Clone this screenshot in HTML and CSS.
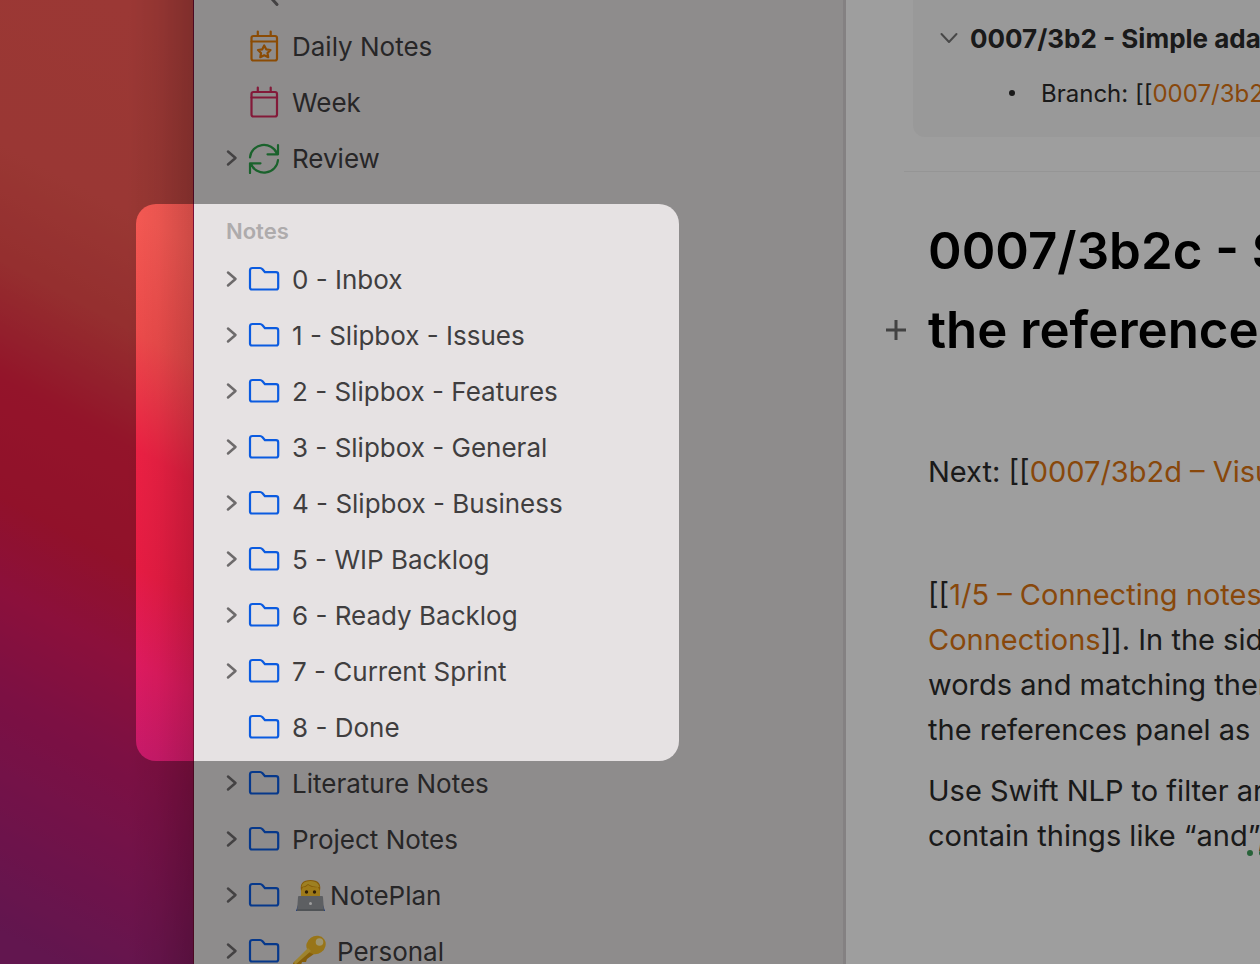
FILE: index.html
```html
<!DOCTYPE html>
<html lang="en">
<head>
    <meta charset="UTF-8">
    <meta name="viewport" content="width=device-width, initial-scale=1.0">
    <title>NotePlan</title>
    <link rel="stylesheet" href="styles.css">
</head>
<body>

    <!-- Shared icons -->
    <svg class="sprite" width="0" height="0" aria-hidden="true">
        <symbol id="chevron" viewBox="0 0 12 18">
            <path d="M2 2.500L9.500 9L2 15.500"/>
        </symbol>
        <symbol id="folder" viewBox="0 0 32 32">
            <path d="M2 7.500Q2 5 4.500 5H12Q13.500 5 14.500 6.200L17 9.200H28Q30.200 9.200 30.200 11.400V24.500Q30.200 26.500 28.200 26.500H4Q2 26.500 2 24.500Z"/>
        </symbol>
    </svg>

    <!-- Desktop wallpaper -->
    <div class="desktop"></div>

    <!-- Sidebar -->
    <nav class="sidebar">
        <ul class="filters">
            <li class="row">
                <a href="#" aria-label="Search"><svg class="icon search" viewBox="0 0 32 32"><circle cx="13" cy="14" r="9.500"/><path d="M20 20.500L29 30.500"/></svg></a>
            </li>
            <li class="row">
                <a href="#"><svg class="icon daily" viewBox="0 0 32 32"><rect x="3.500" y="6" width="25.500" height="24.500" rx="2"/><path d="M3.500 11.500H29M9.800 1.500V6M22.700 1.500V6M16.200 15.500L18.200 19.300L22.500 20L19.500 23L20.200 27.200L16.200 25.300L12.300 27.200L13 23L10 20L14.300 19.300Z"/></svg>Daily Notes</a>
            </li>
            <li class="row">
                <a href="#"><svg class="icon week" viewBox="0 0 32 32"><rect x="3.500" y="6" width="25.500" height="24.500" rx="2"/><path d="M3.500 11.500H29M9.800 1.500V6M22.700 1.500V6"/></svg>Week</a>
            </li>
            <li class="row">
                <button class="toggle" aria-label="Expand"><svg><use href="#chevron"/></svg></button>
                <a href="#"><svg class="icon review" viewBox="0 0 32 32"><path d="M2 15.500A14 13.500 0 0 1 29 11.500M30 3V12.300H19.500M30 18A14 13.500 0 0 1 3 22M2 31V21.300H12.500"/></svg>Review</a>
            </li>
        </ul>

        <section class="notes">
            <h2>Notes</h2>
            <ul>
                <li class="row"><button class="toggle" aria-label="Expand"><svg><use href="#chevron"/></svg></button><a href="#"><svg class="icon folder"><use href="#folder"/></svg>0 - Inbox</a></li>
                <li class="row"><button class="toggle" aria-label="Expand"><svg><use href="#chevron"/></svg></button><a href="#"><svg class="icon folder"><use href="#folder"/></svg>1 - Slipbox - Issues</a></li>
                <li class="row"><button class="toggle" aria-label="Expand"><svg><use href="#chevron"/></svg></button><a href="#"><svg class="icon folder"><use href="#folder"/></svg>2 - Slipbox - Features</a></li>
                <li class="row"><button class="toggle" aria-label="Expand"><svg><use href="#chevron"/></svg></button><a href="#"><svg class="icon folder"><use href="#folder"/></svg>3 - Slipbox - General</a></li>
                <li class="row"><button class="toggle" aria-label="Expand"><svg><use href="#chevron"/></svg></button><a href="#"><svg class="icon folder"><use href="#folder"/></svg>4 - Slipbox - Business</a></li>
                <li class="row"><button class="toggle" aria-label="Expand"><svg><use href="#chevron"/></svg></button><a href="#"><svg class="icon folder"><use href="#folder"/></svg>5 - WIP Backlog</a></li>
                <li class="row"><button class="toggle" aria-label="Expand"><svg><use href="#chevron"/></svg></button><a href="#"><svg class="icon folder"><use href="#folder"/></svg>6 - Ready Backlog</a></li>
                <li class="row"><button class="toggle" aria-label="Expand"><svg><use href="#chevron"/></svg></button><a href="#"><svg class="icon folder"><use href="#folder"/></svg>7 - Current Sprint</a></li>
                <li class="row"><a href="#"><svg class="icon folder"><use href="#folder"/></svg>8 - Done</a></li>
            </ul>
        </section>

        <ul>
            <li class="row"><button class="toggle" aria-label="Expand"><svg><use href="#chevron"/></svg></button><a href="#"><svg class="icon folder"><use href="#folder"/></svg>Literature Notes</a></li>
            <li class="row"><button class="toggle" aria-label="Expand"><svg><use href="#chevron"/></svg></button><a href="#"><svg class="icon folder"><use href="#folder"/></svg>Project Notes</a></li>
            <li class="row"><button class="toggle" aria-label="Expand"><svg><use href="#chevron"/></svg></button><a href="#"><svg class="icon folder"><use href="#folder"/></svg><span class="emoji-label"><svg class="emoji" viewBox="0 0 34 34"><path fill="#2457c4" d="M4 33L7 24H30L33 33Z"/><path fill="#ffc629" d="M9 10Q9 3 18.500 3Q28 3 28 10V22H9Z"/><path fill="#d9930f" d="M9 13Q7 2 18.500 2Q30 2 28 13L26 9Q20 10 16 7Q13 10 11 9Z"/><path fill="#ffcf38" d="M9.500 9Q10 3 18.500 3Q26 3 27.500 9Q20 9 16 6Q13 9 9.500 9Z"/><circle cx="14.500" cy="14" r="1.700" fill="#4a2f0c"/><circle cx="22.500" cy="14" r="1.700" fill="#4a2f0c"/><path fill="#96999f" d="M6 19Q6 18 7 18H30Q31 18 31 19L32 33H5Z"/><path fill="#82868c" d="M5 31H32V33H5Z"/><circle cx="18.500" cy="25.500" r="1.500" fill="#fff"/></svg>NotePlan</span></a></li>
            <li class="row"><button class="toggle" aria-label="Expand"><svg><use href="#chevron"/></svg></button><a href="#"><svg class="icon folder"><use href="#folder"/></svg><span class="emoji-label spaced"><svg class="emoji" viewBox="0 0 34 34"><path fill="#d99a12" d="M17 15L22 20L15 25L14 28L10 28L9 31L5 32L2 34L1 29Z"/><ellipse cx="24" cy="11" rx="10" ry="9" transform="rotate(-35 24 11)" fill="#f6bd27"/><path fill="#ffd34a" d="M16 14L19 17L3 31L2 28Z"/><circle cx="27.500" cy="8" r="3.800" fill="#fff0b5"/></svg>Personal</span></a></li>
        </ul>
    </nav>

    <!-- Editor -->
    <main class="editor">
        <section class="references">
            <h3><button class="fold" aria-label="Collapse"><svg viewBox="0 0 18 12"><path d="M1.500 2L9 10L16.500 2"/></svg></button>0007/3b2 - Simple ada</h3>
            <ul>
                <li>Branch: [[<a href="#">0007/3b2</a></li>
            </ul>
        </section>
        <hr>
        <article>
            <header>
                <button class="add" aria-label="Add"><svg viewBox="0 0 20 20"><path d="M10 0V20M0 10H20"/></svg></button>
                <h1>0007/3b2c - S<br>the references</h1>
            </header>
            <p class="next">Next: [[<a href="#">0007/3b2d – Visu</a></p>
            <p>[[<a href="#">1/5 – Connecting notes<br>Connections</a>]]. In the sid<br>words and matching ther<br>the references panel as '</p>
            <p>Use Swift NLP to filter ar<br>contain things like “and<span class="grammar">”,</span></p>
        </article>
    </main>

</body>
</html>
```

FILE: styles.css
```css
* {
    box-sizing: border-box;
}
body {
    margin: 0;
    display: flex;
    height: 100vh;
    overflow: hidden;
    font-family: Inter, "Noto Sans", sans-serif;
    background-color: #fff;
}
ul {
    list-style: none;
    margin: 0;
    padding: 0;
}
button {
    padding: 0;
    border: none;
    background: none;
    cursor: pointer;
}
svg {
    fill: none;
    stroke-linecap: round;
    stroke-linejoin: round;
}
.sprite {
    position: absolute;
}
/* Wallpaper, with the shadow of the window on its right side */
.desktop {
    flex: 0 0 194px;
    border-right: 1px solid #7a1038;
    background:
        linear-gradient(to right, rgba(0, 0, 0, 0) 66%, rgba(0, 0, 0, 0.06) 82%, rgba(0, 0, 0, 0.18)),
        linear-gradient(208deg, #fb5b56 4%, #f85a54 23%, #f04c4c 34%, #ee3548 40%, #ee2144 45%, #ea1c44 56%, #e11b60 65%, #ca1a6c 74%, #b81e76 84%, #9e2480 97%);
}
/* Sidebar */
.sidebar {
    flex: 0 0 652px;
    background-color: #e6e2e3;
    border-right: 3px solid #d5d1d2;
    padding-left: 32px;
}
.filters {
    margin-top: -38px;
    margin-bottom: 18px;
}
.row {
    display: flex;
    align-items: center;
    justify-content: flex-start;
    height: 56px;
    font-size: 26px;
}
.row a {
    display: flex;
    align-items: center;
    gap: 12px;
    color: #403e3f;
    text-decoration: none;
}
.row a:first-child {
    margin-left: 22px;
}
.toggle {
    width: 22px;
    height: 18px;
    text-align: left;
}
.toggle svg {
    display: block;
    width: 12px;
    height: 18px;
    stroke: #6e6b6c;
    stroke-width: 2.5;
}
.icon {
    width: 32px;
    height: 32px;
    stroke-width: 2.2;
}
.search {
    stroke: #6e6b6c;
    stroke-width: 3;
}
.daily {
    stroke: #e07a08;
}
.week {
    stroke: #d32a5c;
}
.review {
    stroke: #2b9f48;
}
.folder {
    stroke: #0b5be0;
}
.emoji-label {
    display: flex;
    align-items: center;
    gap: 4px;
}
.emoji-label.spaced {
    gap: 11px;
}
.emoji {
    width: 34px;
    height: 34px;
}
/* Notes group, spotlighted over the dimmed window */
.notes {
    position: relative;
}
.notes::after {
    content: "";
    position: absolute;
    z-index: 10;
    top: 0;
    right: 164px;
    bottom: -6px;
    left: -90px;
    border-radius: 20px;
    box-shadow: 0 0 0 200vmax rgba(0, 0, 0, 0.38);
    pointer-events: none;
}
.notes h2 {
    margin: 0;
    height: 47px;
    padding-top: 12px;
    font-size: 22px;
    line-height: 30px;
    font-weight: 600;
    color: #aeabac;
}
/* Editor */
.editor {
    flex: 1;
    min-width: 0;
    overflow: hidden;
    white-space: nowrap;
    color: #2a2a2a;
}
.editor a {
    color: #dc7412;
    text-decoration: none;
}
.references {
    margin-left: 67px;
    padding: 6px 0 21px 27px;
    background-color: #f7f7f7;
    border-radius: 0 0 0 12px;
}
.references h3 {
    display: flex;
    align-items: center;
    gap: 12px;
    height: 64px;
    margin: 0;
    font-size: 26px;
    font-weight: 700;
}
.fold svg {
    display: block;
    width: 18px;
    height: 12px;
    stroke: #757575;
    stroke-width: 2;
}
.references li {
    display: flex;
    align-items: center;
    height: 46px;
    padding-left: 69px;
    font-size: 24px;
}
.references li::before {
    content: "";
    flex: none;
    width: 6px;
    height: 6px;
    margin-right: 26px;
    border-radius: 50%;
    background-color: #2a2a2a;
}
.editor hr {
    margin: 34px 0 0 58px;
    border: none;
    border-top: 1px solid #f0f0f0;
}
article {
    padding-left: 82px;
}
header {
    display: flex;
    align-items: flex-end;
    margin-top: 39px;
    margin-left: -42px;
}
.add {
    flex: 0 0 42px;
    height: 79px;
    text-align: left;
}
.add svg {
    display: block;
    width: 20px;
    height: 20px;
    stroke: #6b6b6b;
    stroke-width: 3;
    stroke-linecap: butt;
}
h1 {
    margin: 0;
    font-size: 51px;
    line-height: 79px;
    font-weight: 600;
    color: #000;
}
article p {
    margin: 0 0 16px;
    font-size: 29px;
    line-height: 45px;
}
article .next {
    margin: 80px 0 78px;
}
.grammar {
    text-decoration: underline dotted #3f9f5c 6px;
    text-underline-offset: 4px;
    text-decoration-skip-ink: none;
}
```
